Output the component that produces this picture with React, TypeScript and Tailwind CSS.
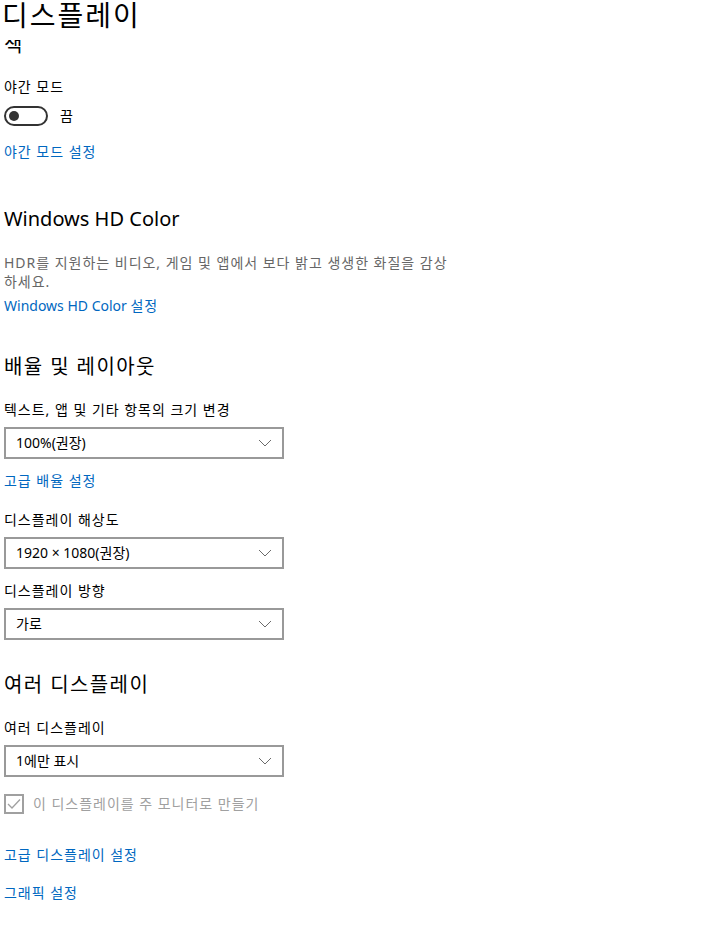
import React from 'react';

const FONT = "font-['Segoe_UI','Noto_Sans','Noto_Sans_CJK_KR',sans-serif]";
// Korean glyphs in the reference run wider than Noto CJK; a little tracking evens it out
const KO = 'tracking-[0.07em]';

function Link({ children, className = '' }: { children: React.ReactNode; className?: string }) {
  return <a className={`block w-fit text-[14px] leading-[20px] text-[#0067c0] ${className}`}>{children}</a>;
}

function Dropdown({ value, className = '' }: { value: string; className?: string }) {
  return (
    <div className={`flex h-[32px] w-[280px] items-center justify-between border-2 border-[#999999] bg-white pl-[10px] pr-[8px] ${className}`}>
      <span className="text-[14px] leading-[20px] text-black">{value}</span>
      <svg width="14" height="8" viewBox="0 0 14 8" className="mr-[2px]">
        <path d="M1 1 L7 7 L13 1" fill="none" stroke="#6b6b6b" strokeWidth="1" />
      </svg>
    </div>
  );
}

export default function App() {
  return (
    <div className={`relative h-[943px] w-[720px] overflow-hidden bg-white text-black ${FONT}`}>
      {/* header over the scrolled list */}
      <div className="absolute left-0 right-0 top-0 z-10 h-[40px] bg-white">
        <h1 className={`pl-[2px] text-[28px] leading-[30px] font-normal ${KO}`}>디스플레이</h1>
      </div>

      <div className="flex flex-col pl-[4px] pt-[31px]">
        <h2 className="text-[20px] leading-[28px]">색</h2>

        <div className={`mt-[18px] text-[14px] leading-[20px] ${KO}`}>야간 모드</div>
        <div className="mt-[9px] flex h-[20px] items-center">
          <div className="flex h-[20px] w-[44px] items-center rounded-full border-2 border-[#333333] pl-[3px]">
            <div className="h-[10px] w-[10px] rounded-full bg-[#333333]" />
          </div>
          <span className="ml-[12px] text-[14px] leading-[20px]">끔</span>
        </div>
        <Link className={`mt-[16px] ${KO}`}>야간 모드 설정</Link>

        <h2 className="mt-[43px] text-[20px] leading-[28px]">Windows HD Color</h2>
        <p className={`mt-[20px] whitespace-nowrap text-[14px] leading-[19px] text-[#666666] ${KO}`}>
          HDR를 지원하는 비디오, 게임 및 앱에서 보다 밝고 생생한 화질을 감상
          <br />
          하세요.
        </p>
        <Link className="mt-[5px]">
          Windows HD Color <span className={KO}>설정</span>
        </Link>

        <h2 className={`mt-[37px] text-[20px] leading-[28px] ${KO}`}>배율 및 레이아웃</h2>
        <div className={`mt-[19px] text-[14px] leading-[20px] ${KO}`}>텍스트, 앱 및 기타 항목의 크기 변경</div>
        <Dropdown className="mt-[7px]" value="100%(권장)" />
        <Link className={`mt-[12px] ${KO}`}>고급 배율 설정</Link>

        <div className={`mt-[19px] text-[14px] leading-[20px] ${KO}`}>디스플레이 해상도</div>
        <Dropdown className="mt-[7px]" value="1920 × 1080(권장)" />
        <div className={`mt-[12px] text-[14px] leading-[20px] ${KO}`}>디스플레이 방향</div>
        <Dropdown className="mt-[7px]" value="가로" />

        <h2 className={`mt-[31px] text-[20px] leading-[28px] ${KO}`}>여러 디스플레이</h2>
        <div className={`mt-[19px] text-[14px] leading-[20px] ${KO}`}>여러 디스플레이</div>
        <Dropdown className="mt-[7px]" value="1에만 표시" />

        <div className="mt-[17px] flex h-[20px] items-center">
          <div className="flex h-[20px] w-[20px] items-center justify-center border-2 border-[#a0a0a0]">
            <svg width="14" height="12" viewBox="0 0 14 12">
              <path d="M1 6 L5 10 L13 1.5" fill="none" stroke="#a0a0a0" strokeWidth="1.3" />
            </svg>
          </div>
          <span className={`ml-[9px] text-[14px] leading-[20px] text-[#a0a0a0] ${KO}`}>이 디스플레이를 주 모니터로 만들기</span>
        </div>

        <Link className={`mt-[31px] ${KO}`}>고급 디스플레이 설정</Link>
        <Link className={`mt-[18px] ${KO}`}>그래픽 설정</Link>
      </div>
    </div>
  );
}
